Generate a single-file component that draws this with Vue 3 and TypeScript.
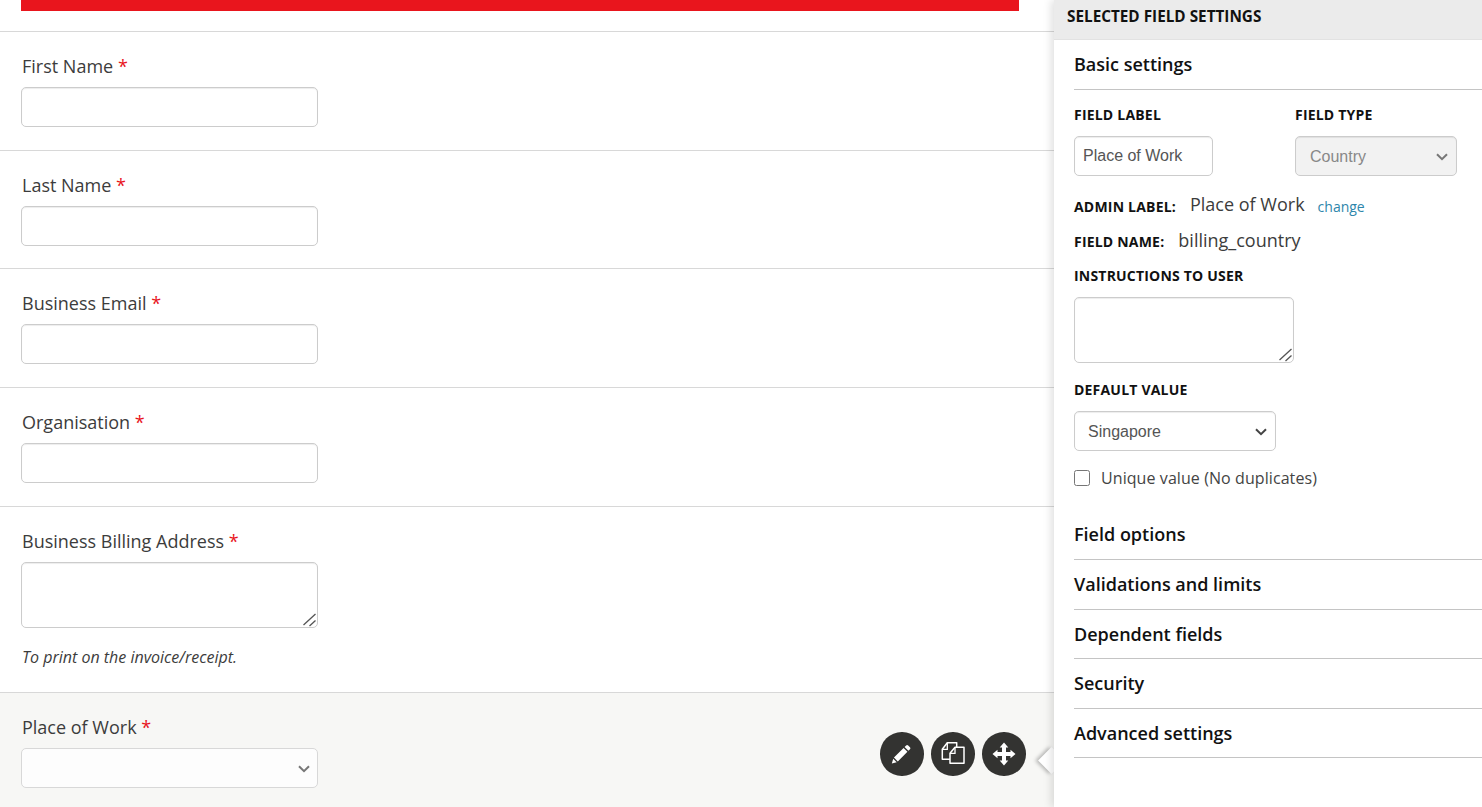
<template>
  <div class="page">
    <main class="form-area">
      <div class="red-bar"></div>

      <div v-for="field in fields" :key="field.label" class="row">
        <label class="field-label">{{ field.label }} <span class="req">*</span></label>
        <div v-if="field.multi" class="area-wrap">
          <textarea class="control area"></textarea>
          <svg class="grip" viewBox="0 0 14 14" width="14" height="14">
            <path d="M.5 12 12.500 1M6.500 13l6-5.500" fill="none" stroke="#555" stroke-width="1.300" />
          </svg>
        </div>
        <input v-else class="control" type="text" />
        <p v-if="field.hint" class="hint">{{ field.hint }}</p>
      </div>

      <div class="row selected">
        <div class="selected-field">
          <label class="field-label">Place of Work <span class="req">*</span></label>
          <div class="select-wrap">
            <select class="control plain-select"></select>
            <svg class="chevron" viewBox="0 0 12 8" width="12" height="8">
              <path d="M1 1.200 6 6.200 11 1.200" fill="none" stroke="#777" stroke-width="2" />
            </svg>
          </div>
        </div>

        <div class="actions">
          <button class="round" type="button" aria-label="Edit">
            <svg class="pencil" viewBox="0 0 24 24" width="22" height="22">
              <path d="M17.600 2.600a1.600 1.600 0 0 1 2.200 0l2 2a1.600 1.600 0 0 1 0 2.200l-1.700 1.700-4.200-4.200zM14.800 5.400 19 9.600 8.500 20.100 4.300 15.900zM3.500 17.100l3.800 3.800-5.300 1.500z" fill="#fff" />
            </svg>
          </button>
          <button class="round" type="button" aria-label="Duplicate">
            <svg viewBox="0 0 24 24" width="24" height="24">
              <path d="M9 17.300H1.300v-10l5-6.600h9.400v4.600" fill="none" stroke="#fff" stroke-width="1.500" stroke-linejoin="round" />
              <path d="M6.300.7v6.600h-5" fill="none" stroke="#fff" stroke-width="1.300" />
              <path d="M14 5.300h9v16H9v-10z" fill="none" stroke="#fff" stroke-width="1.500" stroke-linejoin="round" />
              <path d="M14 5.300v6H9" fill="none" stroke="#fff" stroke-width="1.300" />
            </svg>
          </button>
          <button class="round" type="button" aria-label="Move">
            <svg viewBox="0 0 24 24" width="24" height="24">
              <path d="M12 .5l4.300 5H14V10h4.500V7.700l5 4.300-5 4.300V14H14v4.500h2.300l-4.300 5-4.300-5H10V14H5.500v2.300L.5 12l5-4.300V10H10V5.500H7.700z" fill="#fff" />
            </svg>
          </button>
          <span class="caret"></span>
        </div>
      </div>
    </main>

    <aside class="panel">
      <h2 class="panel-title">SELECTED FIELD SETTINGS</h2>
      <div class="panel-body">
        <h3 class="section first">Basic settings</h3>

        <div class="two-col">
          <div class="col-label">
            <label class="small-label">FIELD LABEL</label>
            <input class="control label-input" type="text" value="Place of Work" />
          </div>
          <div class="col-type">
            <label class="small-label">FIELD TYPE</label>
            <div class="select-wrap">
              <select class="control type-select" disabled>
                <option>Country</option>
              </select>
              <svg class="chevron" viewBox="0 0 12 8" width="12" height="8">
                <path d="M1 1.200 6 6.200 11 1.200" fill="none" stroke="#777" stroke-width="2" />
              </svg>
            </div>
          </div>
        </div>

        <div class="meta admin">
          <span class="small-label">ADMIN LABEL:</span>
          <span class="meta-value raised">Place of Work</span>
          <a class="change" href="#">change</a>
        </div>
        <div class="meta name">
          <span class="small-label">FIELD NAME:</span>
          <span class="meta-value">billing_country</span>
        </div>

        <label class="small-label block instructions">INSTRUCTIONS TO USER</label>
        <div class="area-wrap small-wrap">
          <textarea class="control area small-area"></textarea>
          <svg class="grip" viewBox="0 0 14 14" width="14" height="14">
            <path d="M.5 12 12.500 1M6.500 13l6-5.500" fill="none" stroke="#555" stroke-width="1.300" />
          </svg>
        </div>

        <label class="small-label block default-label">DEFAULT VALUE</label>
        <div class="select-wrap default-wrap">
          <select class="control default-select">
            <option>Singapore</option>
          </select>
          <svg class="chevron" viewBox="0 0 12 8" width="12" height="8">
            <path d="M1 1.200 6 6.200 11 1.200" fill="none" stroke="#444" stroke-width="2" />
          </svg>
        </div>

        <label class="unique">
          <input type="checkbox" />
          <span>Unique value (No duplicates)</span>
        </label>

        <h3 v-for="title in sections" :key="title" class="section">{{ title }}</h3>
      </div>
    </aside>
  </div>
</template>

<script setup lang="ts">
interface Field {
  label: string;
  multi?: boolean;
  hint?: string;
}

const fields: Field[] = [
  { label: 'First Name' },
  { label: 'Last Name' },
  { label: 'Business Email' },
  { label: 'Organisation' },
  { label: 'Business Billing Address', multi: true, hint: 'To print on the invoice/receipt.' }
];

const sections: string[] = [
  'Field options',
  'Validations and limits',
  'Dependent fields',
  'Security',
  'Advanced settings'
];
</script>

<style>
html,
body {
  margin: 0;
  background: #fff;
}
</style>

<style scoped>
* {
  box-sizing: border-box;
}

.page {
  display: flex;
  height: 807px;
  overflow: hidden;
  font-family: "Open Sans", sans-serif;
  color: #333;
}

.form-area {
  display: flex;
  flex-direction: column;
  width: 1054px;
  flex: none;
}

.red-bar {
  width: 998px;
  height: 11px;
  margin: 0 0 19.900px 21px;
  background: #e9151d;
}

.row {
  height: 118.700px;
  padding: 20.200px 0 0 21px;
  border-top: 1px solid #d8d8d8;
}

.row:nth-child(6) {
  height: 186.600px;
}

.field-label {
  display: block;
  height: 34.800px;
  padding-left: 1px;
  font-size: 18px;
  line-height: 28px;
  color: #3c3c3c;
}

.req {
  color: #e8141c;
}

.control {
  display: block;
  width: 297px;
  height: 40px;
  padding: 0 8px;
  border: 1px solid #ccc;
  border-radius: 5px;
  background: #fff;
  font-family: "Liberation Sans", Arial, sans-serif;
  font-size: 16px;
  color: #555;
  box-shadow: inset 0 1px 1px rgba(0, 0, 0, 0.075);
  outline: none;
}

.area-wrap {
  position: relative;
  width: 297px;
}

.area {
  height: 66px;
  resize: none;
}

.grip {
  position: absolute;
  right: 1px;
  bottom: 1px;
  pointer-events: none;
}

.hint {
  margin: 18px 0 0 1px;
  font-size: 16px;
  line-height: 22px;
  font-style: italic;
  color: #3c3c3c;
}

.selected {
  flex: 1;
  display: flex;
  justify-content: space-between;
  background: #f7f7f5;
  padding-top: 20px;
  padding-right: 28.300px;
}

.selected .field-label {
  height: 35px;
}

.select-wrap {
  position: relative;
}

.plain-select,
.type-select,
.default-select {
  appearance: none;
}

.plain-select {
  width: 297px;
  background: #fdfdfd;
  border-color: #d8d8d8;
  box-shadow: none;
}

.chevron {
  position: absolute;
  top: 17px;
  right: 9px;
  pointer-events: none;
}

.selected .chevron {
  right: 8px;
}

.actions {
  position: relative;
  display: flex;
  gap: 7.500px;
  padding-top: 19px;
}

.round {
  display: flex;
  align-items: center;
  justify-content: center;
  width: 43.500px;
  height: 43.500px;
  padding: 0;
  border: none;
  border-radius: 50%;
  background: #333331;
}

.pencil {
  margin-left: -2px;
}

.caret {
  position: absolute;
  top: 38px;
  right: -35px;
  width: 19px;
  height: 19px;
  background: #fff;
  transform: rotate(45deg);
  box-shadow: -2px 2px 4px rgba(0, 0, 0, 0.26);
}

.panel {
  position: relative;
  width: 428px;
  flex: none;
  background: #fff;
  box-shadow: -3px 0 8px rgba(0, 0, 0, 0.12);
}

.panel-title {
  height: 40px;
  margin: 0;
  padding-left: 13px;
  background: #ebebeb;
  border-bottom: 1px solid #e2e2e2;
  font-size: 15.300px;
  line-height: 32px;
  font-weight: 700;
  color: #111;
}

.panel-body {
  padding-left: 20px;
}

.section {
  height: 49.500px;
  margin: 0;
  border-bottom: 1px solid #c4c4c4;
  font-size: 18px;
  line-height: 49px;
  font-weight: 600;
  color: #111;
}

.section.first {
  margin-bottom: 15px;
}

.unique + .section {
  height: 72.600px;
  padding-top: 22px;
}

.two-col {
  display: flex;
  height: 72px;
}

.col-label {
  width: 221px;
}

.small-label {
  font-size: 14px;
  line-height: 20px;
  font-weight: 700;
  letter-spacing: 0.2px;
  color: #111;
}

.two-col .small-label {
  display: block;
  height: 31px;
}

.label-input {
  width: 139px;
}

.type-select {
  width: 162px;
  padding: 2px 0 0 14px;
  background: #f2f2f2;
  color: #888;
  opacity: 1;
}

.meta {
  height: 40px;
}

.admin {
  padding-top: 15px;
  height: 51px;
}

.meta .small-label {
  margin-right: 14px;
}

.meta-value {
  font-size: 18px;
  line-height: 24px;
  color: #3c3c3c;
}

.raised {
  vertical-align: 1px;
}

.change {
  margin-left: 13px;
  font-size: 14px;
  color: #2e86ab;
  text-decoration: none;
}

.block {
  display: block;
}

.instructions {
  margin-top: -2px;
  height: 31px;
}

.small-wrap {
  width: 220px;
}

.small-area {
  width: 220px;
}

.default-label {
  margin-top: 17px;
  height: 31px;
}

.default-wrap {
  width: 202px;
}

.default-select {
  width: 202px;
  padding: 2px 0 0 13px;
}

.unique {
  display: flex;
  align-items: center;
  gap: 11px;
  height: 20px;
  margin-top: 17px;
  font-size: 16px;
  letter-spacing: 0.08px;
  color: #444;
}

.unique input {
  width: 16px;
  height: 16px;
  margin: 0;
}
</style>
